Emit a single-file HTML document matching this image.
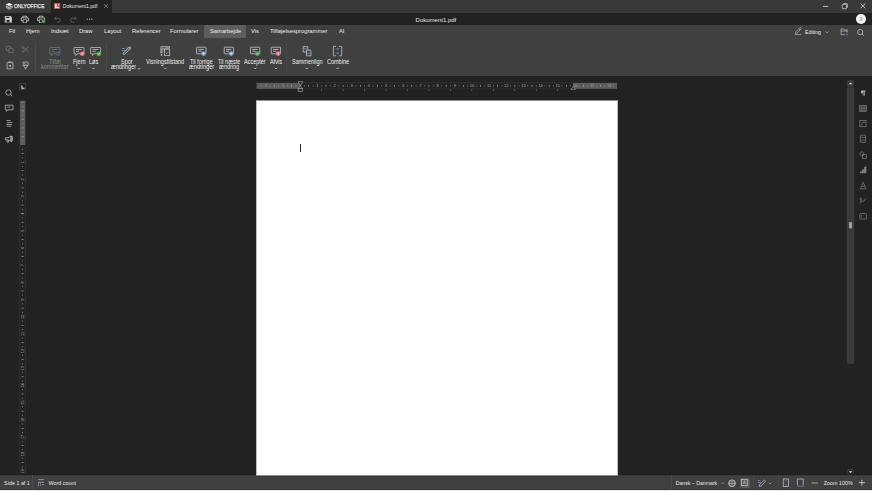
<!DOCTYPE html>
<html><head><meta charset="utf-8">
<style>
*{margin:0;padding:0;box-sizing:border-box}
html,body{width:872px;height:491px;overflow:hidden;background:#222;font-family:"Liberation Sans",sans-serif;color:#e8e8e8}
.a{position:absolute}
.t{position:absolute;white-space:nowrap;line-height:1}
svg{position:absolute;overflow:visible}
#title{left:0;top:0;width:872px;height:13px;background:#393939}
#quick{left:0;top:13px;width:872px;height:12px;background:#222}
#tb{left:0;top:25px;width:872px;height:51px;background:#404040}
#status{left:0;top:475px;width:872px;height:15px;background:#404040;border-top:1px solid #393939;border-bottom:1px solid #383838}
#bottom{left:0;top:490px;width:872px;height:1px;background:#e8e8e8}
.menu{font-size:6.1px;color:#ececec;top:27.9px;transform:scaleX(.95);transform-origin:0 0}
.lbl{font-size:6.4px;color:#ececec;transform:scaleX(.86);transform-origin:0 0}
.dis{color:#8a8a8a}
.st{font-size:5.4px;color:#e6e6e6;top:480.9px}
.sep{position:absolute;width:1px;background:#4c4c4c}
</style></head><body>
<!-- title bar -->
<div class="a" id="title"></div>
<div class="a" style="left:51px;top:0;width:61px;height:13px;background:#222"></div>
<svg style="left:0;top:0" width="50" height="13">
  <path d="M5.9 5.3L9.25 6.8 12.6 5.3 12.7 7.7 9.25 10.1 5.8 7.7z" fill="#b0b0b0"/>
  <path d="M6.1 6.9L9.25 8.3 12.4 6.9M6.6 8.4L9.25 9.5 11.9 8.4" stroke="#5a5a5a" stroke-width=".45" fill="none"/>
  <path d="M9.25 2.9L12.8 4.4 9.25 6 5.7 4.4z" fill="#fafafa"/>
</svg>
<div class="t" style="left:14.4px;top:3.2px;font-size:6.1px;color:#e4e4e4;-webkit-text-stroke:.25px #e4e4e4;transform:scaleX(0.79);transform-origin:0 0">ONLYOFFICE</div>
<svg style="left:0;top:0" width="70" height="13"><rect x="53.9" y="2.9" width="6.3" height="6.2" rx=".6" fill="#c25252"/><path d="M55 4.1h1.7v2.9h2.4v.9H55z" fill="#f0d8d8"/><circle cx="58.6" cy="4.6" r=".65" fill="#f0d8d8"/><path d="M57.3 6.5l1.1-1.2" stroke="#f0d8d8" stroke-width=".5"/></svg>
<div class="t" style="left:62.8px;top:3.6px;font-size:5.1px;color:#e6e6e6">Dokument1.pdf</div>
<svg style="left:103.8px;top:3.6px" width="4" height="4"><path d="M0 0L4 4M4 0L0 4" stroke="#aaa" stroke-width=".55"/></svg>
<svg style="left:822px;top:3px" width="44" height="7">
  <path d="M1 3.4h5.2" stroke="#ddd" stroke-width=".8"/>
  <rect x="20.2" y="1.5" width="4.3" height="4.2" rx=".7" stroke="#ddd" stroke-width=".7" fill="none"/>
  <path d="M21.3 .5h3.3a.9.9 0 0 1 .9.9v3.3" stroke="#ddd" stroke-width=".65" fill="none"/>
  <path d="M38.6 0.5L43.3 5.2M43.3 0.5L38.6 5.2" stroke="#ddd" stroke-width=".8"/>
</svg>

<!-- quick access -->
<div class="a" id="quick"></div>
<div class="t" style="left:415.6px;top:17px;font-size:6px;color:#e6e6e6">Dokument1.pdf</div>
<svg style="left:0;top:0" width="100" height="26">
  <path fill="#cfcfcf" d="M4.8 16h5.8l1.3 1.3v5.3H4.8z"/><path fill="#222" d="M6.3 16.8h3.1v1.3H6.3z M6.6 19.9h2.9v2h-2.9z M5.6 16.8h.2v5h-.2z"/>
  <g fill="#cfcfcf" fill-rule="evenodd">
    <path d="M22.4 17.4v-.5a1.1 1.1 0 0 1 1.1-1.1h2.6a1.1 1.1 0 0 1 1.1 1.1v.5h-.8v-.5a.3.3 0 0 0-.3-.3h-2.6a.3.3 0 0 0-.3.3v.5z"/>
    <path d="M22 17.4h5.6a1.3 1.3 0 0 1 1.3 1.3v1.5a1.1 1.1 0 0 1-1.1 1.1h-.9v1.5h-4.2v-1.5h-.9a1.1 1.1 0 0 1-1.1-1.1v-1.5a1.3 1.3 0 0 1 1.3-1.3z M22 18.2a.5.5 0 0 0-.5.5v1.5a.3.3 0 0 0 .3.3h.9v-1h4.2v1h.9a.3.3 0 0 0 .3-.3v-1.5a.5.5 0 0 0-.5-.5z M23.5 20.1v2.2h2.6v-2.2z"/>
    <path d="M38.7 17.4v-.5a1.1 1.1 0 0 1 1.1-1.1h2.6a1.1 1.1 0 0 1 1.1 1.1v.5h-.8v-.5a.3.3 0 0 0-.3-.3h-2.6a.3.3 0 0 0-.3.3v.5z"/>
    <path d="M38.3 17.4h5.6a1.3 1.3 0 0 1 1.3 1.3v1.5a1.1 1.1 0 0 1-1.1 1.1h-.9v1.5h-4.2v-1.5h-.9a1.1 1.1 0 0 1-1.1-1.1v-1.5a1.3 1.3 0 0 1 1.3-1.3z M38.3 18.2a.5.5 0 0 0-.5.5v1.5a.3.3 0 0 0 .3.3h.9v-1h4.2v1h.9a.3.3 0 0 0 .3-.3v-1.5a.5.5 0 0 0-.5-.5z M39.8 20.1v2.2h2.6v-2.2z"/>
  </g>
  <circle cx="43.4" cy="21.3" r="1.9" fill="#5aa65e" stroke="#222" stroke-width=".4"/>
  <g stroke="#6a6a6a" stroke-width=".8" fill="none">
    <path d="M54.6 18.2h3.6a2 2 0 0 1 0 4h-1.4M54.6 18.2l1.5-1.5M54.6 18.2l1.5 1.5"/>
    <path d="M76.2 18.2h-3.6a2 2 0 0 0 0 4h1.4M76.2 18.2l-1.5-1.5M76.2 18.2l-1.5 1.5"/>
  </g>
  <g fill="#a8a8a8"><rect x="86.7" y="18.6" width="1.2" height="1.2"/><rect x="89" y="18.6" width="1.2" height="1.2"/><rect x="91.3" y="18.6" width="1.2" height="1.2"/></g>
</svg>
<div class="a" style="left:856.4px;top:14.1px;width:9.6px;height:9.6px;border-radius:50%;background:#f4f4f4"></div>
<div class="t" style="left:859px;top:17.6px;font-size:4.6px;color:#8a7aa0;transform:scaleX(.7);transform-origin:0 0">JR</div>

<!-- toolbar -->
<div class="a" id="tb"></div>
<div class="a" style="left:204.4px;top:25.4px;width:41.6px;height:12.5px;background:#5d5d5d;border-radius:1.5px"></div>
<div class="t menu" style="left:9.1px">Fil</div>
<div class="t menu" style="left:25.8px">Hjem</div>
<div class="t menu" style="left:50.6px">Indsæt</div>
<div class="t menu" style="left:79px">Draw</div>
<div class="t menu" style="left:103.7px">Layout</div>
<div class="t menu" style="left:131.8px">Referencer</div>
<div class="t menu" style="left:170.3px">Formularer</div>
<div class="t menu" style="left:209.8px">Samarbejde</div>
<div class="t menu" style="left:251.3px">Vis</div>
<div class="t menu" style="left:270px">Tilføjelsesprogrammer</div>
<div class="t menu" style="left:338.9px">AI</div>

<svg style="left:0;top:0" width="872" height="40"><path d="M795.3 33.4l.3-1.4 4.3-4.3a.85.85 0 0 1 1.2 1.2l-4.3 4.3z M798.9 28.7l1.2 1.2 M794.8 34.5h6.4" stroke="#c8c8c8" stroke-width=".6" fill="none"/></svg>
<div class="t menu" style="left:804.5px;top:29.6px;font-size:5.5px">Editing</div>
<svg style="left:825px;top:31px" width="4" height="3"><path d="M.5 .5L2 2l1.5-1.5" stroke="#bbb" stroke-width=".6" fill="none"/></svg>
<svg style="left:0;top:0" width="872" height="40"><path d="M844.6 34.6H841V29h2.5l.9.9h2.8v2.6M841 31h6.2" stroke="#c8c8c8" stroke-width=".65" fill="none"/><path d="M844.9 34.3h2.9M847.1 33.5l.8.8-.8.8" stroke="#5b8ed6" stroke-width=".65" fill="none"/></svg>
<svg style="left:857px;top:28.5px" width="8" height="8"><circle cx="3.2" cy="3.1" r="2.6" stroke="#ccc" stroke-width=".75" fill="none"/><path d="M5.1 5L6.9 6.8" stroke="#ccc" stroke-width=".75"/></svg>

<!-- left group: copy/cut/paste/format -->
<svg style="left:0;top:38px" width="40" height="36">
  <g stroke="#7a7a7a" stroke-width=".7" fill="none">
    <rect x="6.3" y="8.4" width="4.3" height="4.3" rx=".8"/><rect x="8.8" y="10.3" width="4.4" height="4.4" rx=".8" fill="#404040"/>
    <circle cx="23.1" cy="13.6" r=".9"/><circle cx="23.1" cy="9.6" r=".9"/><path d="M23.9 13.1l4.8-4.4M23.9 10.1l4.4 3.4"/>
  </g>
  <g stroke="#bdbdbd" stroke-width=".75" fill="none">
    <path d="M7.1 24.6h5.9v6.2h-5.9z M8.7 24.6v-.8h2.7v.8"/><rect x="9.1" y="26.9" width="1.9" height="1.7" fill="#bdbdbd" stroke="none"/>
    <path d="M23.1 24.1h5v3.4h-5z M23.7 27.5l.9 2.4h1.9l.9-2.4 M25.5 29.9v1.4"/><path d="M24.6 24.6v1.6h2" stroke-width=".6"/>
  </g>
</svg>
<div class="sep" style="left:35px;top:44px;height:27px"></div>
<div class="sep" style="left:106px;top:44px;height:27px"></div>
<div class="sep" style="left:286px;top:44px;height:27px"></div>

<!-- comment icons -->
<svg style="left:0;top:38px" width="360" height="36">
  
  <g transform="translate(49.8 9.5)" stroke="#7a7a7a"><path d="M0 .6a.6.6 0 0 1 .6-.6h8.8a.6.6 0 0 1 .6.6v5a.6.6 0 0 1-.6.6H3.2L1.8 8.1V6.2H.6a.6.6 0 0 1-.6-.6z M2 2h5.6M2 3.9h3.2" stroke-width=".75" fill="none"/></g>
  <circle cx="58.1" cy="15.7" r="2.3" fill="#4a5f8a"/><path d="M56.9 15.7h2.4" stroke="#333" stroke-width=".6"/>
  <g transform="translate(74 9.5)" stroke="#c8c8c8"><path d="M0 .6a.6.6 0 0 1 .6-.6h8.8a.6.6 0 0 1 .6.6v5a.6.6 0 0 1-.6.6H3.2L1.8 8.1V6.2H.6a.6.6 0 0 1-.6-.6z M2 2h5.6M2 3.9h3.2" stroke-width=".75" fill="none"/></g>
  <circle cx="82.3" cy="15.7" r="2.3" fill="#e47c7c"/><path d="M81.1 15.7h2.4" stroke="#fff" stroke-width=".6"/>
  <g transform="translate(90.6 9.5)" stroke="#c8c8c8"><path d="M0 .6a.6.6 0 0 1 .6-.6h8.8a.6.6 0 0 1 .6.6v5a.6.6 0 0 1-.6.6H3.2L1.8 8.1V6.2H.6a.6.6 0 0 1-.6-.6z M2 2h5.6M2 3.9h3.2" stroke-width=".75" fill="none"/></g>
  <circle cx="98.9" cy="15.7" r="2.3" fill="#5aa85e"/><path d="M97.7 15.7l.8.8 1.4-1.4" stroke="#fff" stroke-width=".6" fill="none"/>

  <!-- track changes -->
  <path d="M123.9 15.6L129.6 10" stroke="#c4c4c4" stroke-width="2.6" stroke-linecap="round"/><path d="M123.9 15.6L129.6 10" stroke="#404040" stroke-width="1.1" stroke-linecap="round"/><path d="M128 9.4l1.6 1.6" stroke="#c4c4c4" stroke-width=".6"/>
  <path d="M121.9 10.5h3.4M121.9 12.5h3" stroke="#6b8fc8" stroke-width=".8"/>

  <!-- display mode -->
  <path d="M160.9 8.6h8.6v1.6h-8.6z" stroke="#c4c4c4" stroke-width=".7" fill="none"/><path d="M165.8 9h.8v.8h-.8zM167.6 9h.8v.8h-.8z" fill="#c4c4c4"/>
  <path d="M160.9 10.2v5.4M160.9 11.4h2.6M160.9 13h2.6M160.9 14.6h2" stroke="#c4c4c4" stroke-width=".7"/>
  <rect x="164.5" y="11.2" width="5.2" height="6.2" fill="none" stroke="#c4c4c4" stroke-width=".75"/>
  <path d="M160.9 16l1.7.6-.7.5.5.9-.5.3-.5-.9-.5.5z" fill="#c4c4c4"/>
  <path d="M165.6 14.6l1.1 1.1 2-2.2" stroke="#7aa3e0" stroke-width=".75" fill="none"/>

  <g transform="translate(196.6 9.2)" stroke="#c8c8c8"><path d="M0 .6a.6.6 0 0 1 .6-.6h8.2a.6.6 0 0 1 .6.6v5.4a.6.6 0 0 1-.6.6H.6a.6.6 0 0 1-.6-.6z M1.8 2.2h5.4M1.8 4h3.4" stroke-width=".8" fill="none"/></g>
  <circle cx="203.6" cy="15.6" r="2.3" fill="#7aa3e0"/><path d="M202.4 15.6h2.4M203.6 14.4v2.4" stroke="#fff" stroke-width=".5"/>
  <g transform="translate(224.2 9.2)" stroke="#c8c8c8"><path d="M0 .6a.6.6 0 0 1 .6-.6h8.2a.6.6 0 0 1 .6.6v5.4a.6.6 0 0 1-.6.6H.6a.6.6 0 0 1-.6-.6z M1.8 2.2h5.4M1.8 4h3.4" stroke-width=".8" fill="none"/></g>
  <circle cx="231.2" cy="15.6" r="2.3" fill="#7aa3e0"/><path d="M230 15.6h2.4M231.2 14.4v2.4" stroke="#fff" stroke-width=".5"/>
  <g transform="translate(250.4 9.2)" stroke="#c8c8c8"><path d="M0 .6a.6.6 0 0 1 .6-.6h8.2a.6.6 0 0 1 .6.6v5.4a.6.6 0 0 1-.6.6H.6a.6.6 0 0 1-.6-.6z M1.8 2.2h5.4M1.8 4h3.4" stroke-width=".8" fill="none"/></g>
  <circle cx="257.4" cy="15.6" r="2.3" fill="#5aa85e"/><path d="M256.3 15.6l.8.8 1.4-1.4" stroke="#fff" stroke-width=".5" fill="none"/>
  <g transform="translate(271.2 9.2)" stroke="#c8c8c8"><path d="M0 .6a.6.6 0 0 1 .6-.6h8.2a.6.6 0 0 1 .6.6v5.4a.6.6 0 0 1-.6.6H.6a.6.6 0 0 1-.6-.6z M1.8 2.2h5.4M1.8 4h3.4" stroke-width=".8" fill="none"/></g>
  <circle cx="278.2" cy="15.6" r="2.3" fill="#e47c7c"/><path d="M277.4 14.8l1.6 1.6M279 14.8l-1.6 1.6" stroke="#fff" stroke-width=".5"/>

  <!-- compare -->
  <path d="M303.2 8.6h4.6v5.4h-4.6z" stroke="#c8c8c8" stroke-width=".75" fill="none"/><path d="M306.5 12.2h4.4v5.6h-4.4z" stroke="#c8c8c8" stroke-width=".75" fill="#404040"/>
  <path d="M304.4 10.8h2.8M304.4 10.8l1-1M304.4 10.8l1 1M307.5 15.4h2.6M307.5 15.4l1-1M307.5 15.4l1 1" stroke="#7aa3e0" stroke-width=".6" fill="none"/>
  <!-- combine -->
  <path d="M336 8.4h-2.6v9.4h2.6 M339.1 8.4h2.6v9.4h-2.6" stroke="#c8c8c8" stroke-width=".75" fill="none"/>
  <path d="M335.6 10.8h2.8M337.6 9.8l1 1-1 1M335.6 15.2h2.8M337.6 14.2l1 1-1 1" stroke="#7aa3e0" stroke-width=".6" fill="none"/>
</svg>

<!-- labels -->
<div class="t lbl dis" style="left:49.2px;top:59.2px">Tilføj</div>
<div class="t lbl dis" style="left:41px;top:64px">kommentar</div>
<div class="t lbl" style="left:73px;top:59.2px">Fjern</div>
<div class="t lbl" style="left:89.4px;top:59.2px">Løs</div>
<div class="t lbl" style="left:120.8px;top:59.2px">Spor</div>
<div class="t lbl" style="left:111px;top:64px">ændringer</div>
<div class="t lbl" style="left:146px;top:59.2px">Visningstilstand</div>
<div class="t lbl" style="left:189.8px;top:59.2px">Til forrige</div>
<div class="t lbl" style="left:188.6px;top:64px">ændringer</div>
<div class="t lbl" style="left:218.3px;top:59.2px">Til næste</div>
<div class="t lbl" style="left:218.7px;top:64px">ændring</div>
<div class="t lbl" style="left:244.4px;top:59.2px">Acceptér</div>
<div class="t lbl" style="left:270px;top:59.2px">Afvis</div>
<div class="t lbl" style="left:291.8px;top:59.2px">Sammenlign</div>
<div class="t lbl" style="left:326.7px;top:59.2px">Combine</div>
<svg style="left:0;top:66.7px" width="360" height="4">
  <g stroke="#c4c4c4" stroke-width=".8" fill="none">
    <path d="M77.6 .7l1.2 1.3 1.2-1.3M92.3 .7l1.2 1.3 1.2-1.3M137.8 1.1l1.2 1.3 1.2-1.3M164.1 .7l1.2 1.3 1.2-1.3M254 .7l1.2 1.3 1.2-1.3M274.9 .7l1.2 1.3 1.2-1.3M305.5 .7l1.2 1.3 1.2-1.3M336.4 .7l1.2 1.3 1.2-1.3"/>
  </g>
</svg>

<!-- canvas -->
<svg style="left:0;top:76px" width="32" height="80">
  <g stroke="#bdbdbd" stroke-width=".75" fill="none">
    <circle cx="8.5" cy="16.5" r="2.7"/><path d="M10.4 18.4l2 1.8"/>
    <path d="M5.4 29.2h7.6v4.6H7.6l-1.2 1.6v-1.6h-1z M7.4 31.1h2.8"/>
    <path d="M6.3 44.6h4.3M7.1 46.6h5.3M6.3 48.5h5.5M6.9 50.3h4.3"/>
    <path d="M5.3 61.8h2.6l3.5-1.9v5.8l-3.5-1.9H5.3z M7.1 64v2.2h1.5v-2"/><ellipse cx="11.6" cy="62.8" rx=".9" ry="2.8"/>
  </g>
</svg>
<div class="a" style="left:19.3px;top:82.6px;width:6.4px;height:7px;border:.6px solid #3c3c3c;background:#1f1f1f"></div>
<svg style="left:19px;top:82px" width="8" height="8"><path d="M2.9 3.4v2.8h2.6" stroke="#e6e6e6" stroke-width="1.1" fill="none"/></svg>
<svg style="left:0;top:0" width="40" height="491">
<rect x="19.8" y="100.3" width="5.6" height="380" fill="#232323" stroke="#363636" stroke-width=".6"/>
<rect x="20.1" y="100.9" width="5" height="44.1" fill="#5c5c5c"/>
<rect x="21.45" y="101.77" width="2.2" height=".6" fill="#a4a4a4"/>
<rect x="22.15" y="105.97" width=".8" height=".8" fill="#a4a4a4"/>
<text x="22.55" y="110.66" font-size="3.9" text-anchor="middle" fill="#a4a4a4" transform="rotate(-90 22.55 110.66)" dy="1.4">2</text>
<rect x="22.15" y="114.55" width=".8" height=".8" fill="#a4a4a4"/>
<rect x="21.45" y="118.95" width="2.2" height=".6" fill="#a4a4a4"/>
<rect x="22.15" y="123.14" width=".8" height=".8" fill="#a4a4a4"/>
<text x="22.55" y="127.83" font-size="3.9" text-anchor="middle" fill="#a4a4a4" transform="rotate(-90 22.55 127.83)" dy="1.4">1</text>
<rect x="22.15" y="131.72" width=".8" height=".8" fill="#a4a4a4"/>
<rect x="21.45" y="136.11" width="2.2" height=".6" fill="#a4a4a4"/>
<rect x="22.15" y="140.31" width=".8" height=".8" fill="#a4a4a4"/>
<rect x="22.15" y="148.89" width=".8" height=".8" fill="#a8a8a8"/>
<rect x="21.45" y="153.28" width="2.2" height=".6" fill="#a8a8a8"/>
<rect x="22.15" y="157.48" width=".8" height=".8" fill="#a8a8a8"/>
<text x="22.55" y="162.17" font-size="3.9" text-anchor="middle" fill="#a8a8a8" transform="rotate(-90 22.55 162.17)" dy="1.4">1</text>
<rect x="22.15" y="166.06" width=".8" height=".8" fill="#a8a8a8"/>
<rect x="21.45" y="170.45" width="2.2" height=".6" fill="#a8a8a8"/>
<rect x="22.15" y="174.65" width=".8" height=".8" fill="#a8a8a8"/>
<text x="22.55" y="179.34" font-size="3.9" text-anchor="middle" fill="#a8a8a8" transform="rotate(-90 22.55 179.34)" dy="1.4">2</text>
<rect x="22.15" y="183.23" width=".8" height=".8" fill="#a8a8a8"/>
<rect x="21.45" y="187.62" width="2.2" height=".6" fill="#a8a8a8"/>
<rect x="22.15" y="191.82" width=".8" height=".8" fill="#a8a8a8"/>
<text x="22.55" y="196.51" font-size="3.9" text-anchor="middle" fill="#a8a8a8" transform="rotate(-90 22.55 196.51)" dy="1.4">3</text>
<rect x="22.15" y="200.40" width=".8" height=".8" fill="#a8a8a8"/>
<rect x="21.45" y="204.79" width="2.2" height=".6" fill="#a8a8a8"/>
<rect x="22.15" y="208.99" width=".8" height=".8" fill="#a8a8a8"/>
<text x="22.55" y="213.68" font-size="3.9" text-anchor="middle" fill="#a8a8a8" transform="rotate(-90 22.55 213.68)" dy="1.4">4</text>
<rect x="22.15" y="217.57" width=".8" height=".8" fill="#a8a8a8"/>
<rect x="21.45" y="221.97" width="2.2" height=".6" fill="#a8a8a8"/>
<rect x="22.15" y="226.16" width=".8" height=".8" fill="#a8a8a8"/>
<text x="22.55" y="230.85" font-size="3.9" text-anchor="middle" fill="#a8a8a8" transform="rotate(-90 22.55 230.85)" dy="1.4">5</text>
<rect x="22.15" y="234.74" width=".8" height=".8" fill="#a8a8a8"/>
<rect x="21.45" y="239.13" width="2.2" height=".6" fill="#a8a8a8"/>
<rect x="22.15" y="243.33" width=".8" height=".8" fill="#a8a8a8"/>
<text x="22.55" y="248.02" font-size="3.9" text-anchor="middle" fill="#a8a8a8" transform="rotate(-90 22.55 248.02)" dy="1.4">6</text>
<rect x="22.15" y="251.91" width=".8" height=".8" fill="#a8a8a8"/>
<rect x="21.45" y="256.31" width="2.2" height=".6" fill="#a8a8a8"/>
<rect x="22.15" y="260.50" width=".8" height=".8" fill="#a8a8a8"/>
<text x="22.55" y="265.19" font-size="3.9" text-anchor="middle" fill="#a8a8a8" transform="rotate(-90 22.55 265.19)" dy="1.4">7</text>
<rect x="22.15" y="269.08" width=".8" height=".8" fill="#a8a8a8"/>
<rect x="21.45" y="273.47" width="2.2" height=".6" fill="#a8a8a8"/>
<rect x="22.15" y="277.67" width=".8" height=".8" fill="#a8a8a8"/>
<text x="22.55" y="282.36" font-size="3.9" text-anchor="middle" fill="#a8a8a8" transform="rotate(-90 22.55 282.36)" dy="1.4">8</text>
<rect x="22.15" y="286.25" width=".8" height=".8" fill="#a8a8a8"/>
<rect x="21.45" y="290.65" width="2.2" height=".6" fill="#a8a8a8"/>
<rect x="22.15" y="294.84" width=".8" height=".8" fill="#a8a8a8"/>
<text x="22.55" y="299.53" font-size="3.9" text-anchor="middle" fill="#a8a8a8" transform="rotate(-90 22.55 299.53)" dy="1.4">9</text>
<rect x="22.15" y="303.42" width=".8" height=".8" fill="#a8a8a8"/>
<rect x="21.45" y="307.81" width="2.2" height=".6" fill="#a8a8a8"/>
<rect x="22.15" y="312.01" width=".8" height=".8" fill="#a8a8a8"/>
<text x="22.55" y="316.70" font-size="3.9" text-anchor="middle" fill="#a8a8a8" transform="rotate(-90 22.55 316.70)" dy="1.4">10</text>
<rect x="22.15" y="320.59" width=".8" height=".8" fill="#a8a8a8"/>
<rect x="21.45" y="324.99" width="2.2" height=".6" fill="#a8a8a8"/>
<rect x="22.15" y="329.18" width=".8" height=".8" fill="#a8a8a8"/>
<text x="22.55" y="333.87" font-size="3.9" text-anchor="middle" fill="#a8a8a8" transform="rotate(-90 22.55 333.87)" dy="1.4">11</text>
<rect x="22.15" y="337.76" width=".8" height=".8" fill="#a8a8a8"/>
<rect x="21.45" y="342.16" width="2.2" height=".6" fill="#a8a8a8"/>
<rect x="22.15" y="346.35" width=".8" height=".8" fill="#a8a8a8"/>
<text x="22.55" y="351.04" font-size="3.9" text-anchor="middle" fill="#a8a8a8" transform="rotate(-90 22.55 351.04)" dy="1.4">12</text>
<rect x="22.15" y="354.93" width=".8" height=".8" fill="#a8a8a8"/>
<rect x="21.45" y="359.32" width="2.2" height=".6" fill="#a8a8a8"/>
<rect x="22.15" y="363.52" width=".8" height=".8" fill="#a8a8a8"/>
<text x="22.55" y="368.21" font-size="3.9" text-anchor="middle" fill="#a8a8a8" transform="rotate(-90 22.55 368.21)" dy="1.4">13</text>
<rect x="22.15" y="372.10" width=".8" height=".8" fill="#a8a8a8"/>
<rect x="21.45" y="376.50" width="2.2" height=".6" fill="#a8a8a8"/>
<rect x="22.15" y="380.69" width=".8" height=".8" fill="#a8a8a8"/>
<text x="22.55" y="385.38" font-size="3.9" text-anchor="middle" fill="#a8a8a8" transform="rotate(-90 22.55 385.38)" dy="1.4">14</text>
<rect x="22.15" y="389.27" width=".8" height=".8" fill="#a8a8a8"/>
<rect x="21.45" y="393.67" width="2.2" height=".6" fill="#a8a8a8"/>
<rect x="22.15" y="397.86" width=".8" height=".8" fill="#a8a8a8"/>
<text x="22.55" y="402.55" font-size="3.9" text-anchor="middle" fill="#a8a8a8" transform="rotate(-90 22.55 402.55)" dy="1.4">15</text>
<rect x="22.15" y="406.44" width=".8" height=".8" fill="#a8a8a8"/>
<rect x="21.45" y="410.84" width="2.2" height=".6" fill="#a8a8a8"/>
<rect x="22.15" y="415.03" width=".8" height=".8" fill="#a8a8a8"/>
<text x="22.55" y="419.72" font-size="3.9" text-anchor="middle" fill="#a8a8a8" transform="rotate(-90 22.55 419.72)" dy="1.4">16</text>
<rect x="22.15" y="423.61" width=".8" height=".8" fill="#a8a8a8"/>
<rect x="21.45" y="428.00" width="2.2" height=".6" fill="#a8a8a8"/>
<rect x="22.15" y="432.20" width=".8" height=".8" fill="#a8a8a8"/>
<text x="22.55" y="436.89" font-size="3.9" text-anchor="middle" fill="#a8a8a8" transform="rotate(-90 22.55 436.89)" dy="1.4">17</text>
<rect x="22.15" y="440.78" width=".8" height=".8" fill="#a8a8a8"/>
<rect x="21.45" y="445.18" width="2.2" height=".6" fill="#a8a8a8"/>
<rect x="22.15" y="449.37" width=".8" height=".8" fill="#a8a8a8"/>
<text x="22.55" y="454.06" font-size="3.9" text-anchor="middle" fill="#a8a8a8" transform="rotate(-90 22.55 454.06)" dy="1.4">18</text>
<rect x="22.15" y="457.95" width=".8" height=".8" fill="#a8a8a8"/>
<rect x="21.45" y="462.35" width="2.2" height=".6" fill="#a8a8a8"/>
<rect x="22.15" y="466.54" width=".8" height=".8" fill="#a8a8a8"/>
<text x="22.55" y="471.23" font-size="3.9" text-anchor="middle" fill="#a8a8a8" transform="rotate(-90 22.55 471.23)" dy="1.4">19</text>
</svg>
<svg style="left:0;top:0" width="872" height="100">
<rect x="256.6" y="82.3" width="360.4" height="6.6" fill="#232323" stroke="#363636" stroke-width=".6"/>
<rect x="256.6" y="83" width="43.6" height="5.8" fill="#5c5c5c"/>
<rect x="573.3" y="83" width="43.7" height="5.8" fill="#5c5c5c"/>
<rect x="261.17" y="85.50" width=".8" height=".8" fill="#a4a4a4"/>
<text x="265.86" y="87.30" font-size="3.9" text-anchor="middle" fill="#a4a4a4">2</text>
<rect x="269.75" y="85.50" width=".8" height=".8" fill="#a4a4a4"/>
<rect x="274.14" y="84.80" width=".6" height="2.2" fill="#a4a4a4"/>
<rect x="278.34" y="85.50" width=".8" height=".8" fill="#a4a4a4"/>
<text x="283.03" y="87.30" font-size="3.9" text-anchor="middle" fill="#a4a4a4">1</text>
<rect x="286.92" y="85.50" width=".8" height=".8" fill="#a4a4a4"/>
<rect x="291.31" y="84.80" width=".6" height="2.2" fill="#a4a4a4"/>
<rect x="295.51" y="85.50" width=".8" height=".8" fill="#a4a4a4"/>
<rect x="304.09" y="85.50" width=".8" height=".8" fill="#a8a8a8"/>
<rect x="308.48" y="84.80" width=".6" height="2.2" fill="#a8a8a8"/>
<rect x="312.68" y="85.50" width=".8" height=".8" fill="#a8a8a8"/>
<text x="317.37" y="87.30" font-size="3.9" text-anchor="middle" fill="#a8a8a8">1</text>
<rect x="321.26" y="85.50" width=".8" height=".8" fill="#a8a8a8"/>
<rect x="325.65" y="84.80" width=".6" height="2.2" fill="#a8a8a8"/>
<rect x="329.85" y="85.50" width=".8" height=".8" fill="#a8a8a8"/>
<text x="334.54" y="87.30" font-size="3.9" text-anchor="middle" fill="#a8a8a8">2</text>
<rect x="338.43" y="85.50" width=".8" height=".8" fill="#a8a8a8"/>
<rect x="342.82" y="84.80" width=".6" height="2.2" fill="#a8a8a8"/>
<rect x="347.02" y="85.50" width=".8" height=".8" fill="#a8a8a8"/>
<text x="351.71" y="87.30" font-size="3.9" text-anchor="middle" fill="#a8a8a8">3</text>
<rect x="355.60" y="85.50" width=".8" height=".8" fill="#a8a8a8"/>
<rect x="360.00" y="84.80" width=".6" height="2.2" fill="#a8a8a8"/>
<rect x="364.19" y="85.50" width=".8" height=".8" fill="#a8a8a8"/>
<text x="368.88" y="87.30" font-size="3.9" text-anchor="middle" fill="#a8a8a8">4</text>
<rect x="372.77" y="85.50" width=".8" height=".8" fill="#a8a8a8"/>
<rect x="377.17" y="84.80" width=".6" height="2.2" fill="#a8a8a8"/>
<rect x="381.36" y="85.50" width=".8" height=".8" fill="#a8a8a8"/>
<text x="386.05" y="87.30" font-size="3.9" text-anchor="middle" fill="#a8a8a8">5</text>
<rect x="389.94" y="85.50" width=".8" height=".8" fill="#a8a8a8"/>
<rect x="394.33" y="84.80" width=".6" height="2.2" fill="#a8a8a8"/>
<rect x="398.53" y="85.50" width=".8" height=".8" fill="#a8a8a8"/>
<text x="403.22" y="87.30" font-size="3.9" text-anchor="middle" fill="#a8a8a8">6</text>
<rect x="407.11" y="85.50" width=".8" height=".8" fill="#a8a8a8"/>
<rect x="411.50" y="84.80" width=".6" height="2.2" fill="#a8a8a8"/>
<rect x="415.70" y="85.50" width=".8" height=".8" fill="#a8a8a8"/>
<text x="420.39" y="87.30" font-size="3.9" text-anchor="middle" fill="#a8a8a8">7</text>
<rect x="424.28" y="85.50" width=".8" height=".8" fill="#a8a8a8"/>
<rect x="428.68" y="84.80" width=".6" height="2.2" fill="#a8a8a8"/>
<rect x="432.87" y="85.50" width=".8" height=".8" fill="#a8a8a8"/>
<text x="437.56" y="87.30" font-size="3.9" text-anchor="middle" fill="#a8a8a8">8</text>
<rect x="441.45" y="85.50" width=".8" height=".8" fill="#a8a8a8"/>
<rect x="445.84" y="84.80" width=".6" height="2.2" fill="#a8a8a8"/>
<rect x="450.04" y="85.50" width=".8" height=".8" fill="#a8a8a8"/>
<text x="454.73" y="87.30" font-size="3.9" text-anchor="middle" fill="#a8a8a8">9</text>
<rect x="458.62" y="85.50" width=".8" height=".8" fill="#a8a8a8"/>
<rect x="463.01" y="84.80" width=".6" height="2.2" fill="#a8a8a8"/>
<rect x="467.21" y="85.50" width=".8" height=".8" fill="#a8a8a8"/>
<text x="471.90" y="87.30" font-size="3.9" text-anchor="middle" fill="#a8a8a8">10</text>
<rect x="475.79" y="85.50" width=".8" height=".8" fill="#a8a8a8"/>
<rect x="480.19" y="84.80" width=".6" height="2.2" fill="#a8a8a8"/>
<rect x="484.38" y="85.50" width=".8" height=".8" fill="#a8a8a8"/>
<text x="489.07" y="87.30" font-size="3.9" text-anchor="middle" fill="#a8a8a8">11</text>
<rect x="492.96" y="85.50" width=".8" height=".8" fill="#a8a8a8"/>
<rect x="497.35" y="84.80" width=".6" height="2.2" fill="#a8a8a8"/>
<rect x="501.55" y="85.50" width=".8" height=".8" fill="#a8a8a8"/>
<text x="506.24" y="87.30" font-size="3.9" text-anchor="middle" fill="#a8a8a8">12</text>
<rect x="510.13" y="85.50" width=".8" height=".8" fill="#a8a8a8"/>
<rect x="514.53" y="84.80" width=".6" height="2.2" fill="#a8a8a8"/>
<rect x="518.72" y="85.50" width=".8" height=".8" fill="#a8a8a8"/>
<text x="523.41" y="87.30" font-size="3.9" text-anchor="middle" fill="#a8a8a8">13</text>
<rect x="527.30" y="85.50" width=".8" height=".8" fill="#a8a8a8"/>
<rect x="531.70" y="84.80" width=".6" height="2.2" fill="#a8a8a8"/>
<rect x="535.89" y="85.50" width=".8" height=".8" fill="#a8a8a8"/>
<text x="540.58" y="87.30" font-size="3.9" text-anchor="middle" fill="#a8a8a8">14</text>
<rect x="544.47" y="85.50" width=".8" height=".8" fill="#a8a8a8"/>
<rect x="548.87" y="84.80" width=".6" height="2.2" fill="#a8a8a8"/>
<rect x="553.06" y="85.50" width=".8" height=".8" fill="#a8a8a8"/>
<text x="557.75" y="87.30" font-size="3.9" text-anchor="middle" fill="#a8a8a8">15</text>
<rect x="561.64" y="85.50" width=".8" height=".8" fill="#a8a8a8"/>
<rect x="566.04" y="84.80" width=".6" height="2.2" fill="#a8a8a8"/>
<rect x="570.23" y="85.50" width=".8" height=".8" fill="#a8a8a8"/>
<text x="574.92" y="87.30" font-size="3.9" text-anchor="middle" fill="#a4a4a4">16</text>
<rect x="578.81" y="85.50" width=".8" height=".8" fill="#a4a4a4"/>
<rect x="583.21" y="84.80" width=".6" height="2.2" fill="#a4a4a4"/>
<rect x="587.40" y="85.50" width=".8" height=".8" fill="#a4a4a4"/>
<text x="592.09" y="87.30" font-size="3.9" text-anchor="middle" fill="#a4a4a4">17</text>
<rect x="595.98" y="85.50" width=".8" height=".8" fill="#a4a4a4"/>
<rect x="600.38" y="84.80" width=".6" height="2.2" fill="#a4a4a4"/>
<rect x="604.57" y="85.50" width=".8" height=".8" fill="#a4a4a4"/>
<text x="609.26" y="87.30" font-size="3.9" text-anchor="middle" fill="#a4a4a4">18</text>
<rect x="613.15" y="85.50" width=".8" height=".8" fill="#a4a4a4"/>
<rect x="321.36" y="89.4" width=".6" height="1.5" fill="#8a8a8a"/>
<rect x="342.82" y="89.4" width=".6" height="1.5" fill="#8a8a8a"/>
<rect x="364.28" y="89.4" width=".6" height="1.5" fill="#8a8a8a"/>
<rect x="385.74" y="89.4" width=".6" height="1.5" fill="#8a8a8a"/>
<rect x="407.20" y="89.4" width=".6" height="1.5" fill="#8a8a8a"/>
<rect x="428.66" y="89.4" width=".6" height="1.5" fill="#8a8a8a"/>
<rect x="450.12" y="89.4" width=".6" height="1.5" fill="#8a8a8a"/>
<rect x="471.58" y="89.4" width=".6" height="1.5" fill="#8a8a8a"/>
<rect x="493.04" y="89.4" width=".6" height="1.5" fill="#8a8a8a"/>
<rect x="514.50" y="89.4" width=".6" height="1.5" fill="#8a8a8a"/>
<rect x="535.96" y="89.4" width=".6" height="1.5" fill="#8a8a8a"/>
<rect x="557.42" y="89.4" width=".6" height="1.5" fill="#8a8a8a"/>
<path d="M298.1 81.6h4.6l-2.3 4.4z M298.1 88.4l2.3-2.2 2.3 2.2z" fill="#2b2b2b" stroke="#b5b5b5" stroke-width=".55"/>
<rect x="298.1" y="88.5" width="4.6" height="3" fill="#2b2b2b" stroke="#b5b5b5" stroke-width=".55"/>
<path d="M571 89.3l2.3-2.6 2.3 2.6z" fill="#2b2b2b" stroke="#b5b5b5" stroke-width=".55"/>
</svg>
<!-- page -->
<div class="a" style="left:256px;top:100px;width:362px;height:375px;background:#fff;border:1px solid #bdbdbd;border-top-color:#8e8e8e;border-bottom:0"></div>
<div class="a" style="left:299.6px;top:144px;width:1px;height:8px;background:#2a2a2a"></div>

<!-- scrollbar -->
<svg style="left:0;top:0" width="872" height="491">
  <rect x="847.2" y="80.3" width="6.6" height="6.2" rx="1.2" fill="#3a3a3a" stroke="#444" stroke-width=".5"/>
  <path d="M848.7 84.3l1.8-1.9 1.8 1.9z" fill="#e0e0e0"/>
  <rect x="847.2" y="87.4" width="6.6" height="276" rx="1.2" fill="#3a3a3a" stroke="#474747" stroke-width=".6"/>
  <rect x="848.9" y="221.9" width="3.3" height="6.6" rx=".6" fill="#a8a8a8" stroke="#333" stroke-width=".4"/>
  <rect x="847.5" y="469.4" width="6" height="5.4" rx="1" fill="#2c2c2c" stroke="#484848" stroke-width=".5"/>
  <path d="M848.8 471.3l1.7 1.8 1.7-1.8z" fill="#e0e0e0"/>
</svg>

<!-- right sidebar -->
<svg style="left:0;top:0" width="872" height="230">
  <path d="M862.2 90.6h3.4v.8h-.6v4.4h-.7v-4.4h-.8v4.4h-.7v-2.4h-.6a1.4 1.4 0 0 1 0-2.8z" fill="#b4b4b4"/>
  <g stroke="#7c7c7c" stroke-width=".7" fill="none">
    <rect x="859.3" y="105.3" width="7.2" height="6.2"/><path d="M859.3 107h7.2M859.3 108.6h7.2M859.3 110.1h7.2M861.7 105.3v6.2M864.1 105.3v6.2"/>
    <rect x="859.8" y="120.5" width="6.2" height="6.2"/><path d="M861 125.6l1.6-3.2h2.4"/>
    <rect x="860.4" y="135.2" width="5.2" height="7.3" rx=".5"/><path d="M860.4 137.4h5.2M860.4 140.2h5.2"/>
    <circle cx="861.8" cy="153.8" r="2"/><rect x="862.4" y="154.4" width="3.8" height="4"/>
    <path d="M859.9 173.2v-1.8h2v-2h2v-2.4h1.2v-.8h1.3v7z" fill="#7c7c7c" stroke="none"/>
    <path d="M863.2 182.2l-2.6 6.4M863.2 182.2l2.6 6.4M861.4 186.4h3.6M859.8 188.8h6.6"/>
    <path d="M860.4 203.6c.6-1.6 1.6-5.4.4-5.8-1.2-.4-.8 3 .8 3.6 1.2.4 2.4-.6 3.2-1.4M863.6 201l2.6-2.6"/>
    <rect x="859.8" y="213.6" width="6.6" height="5.4" rx=".5"/><path d="M861.6 215v2.6"/>
  </g>
</svg>

<!-- status bar -->
<div class="a" id="status"></div>
<div class="a" id="bottom"></div>
<div class="a" style="left:0;top:474px;width:872px;height:1px;background:#1f1f1f"></div>
<div class="a" style="left:256px;top:474px;width:362px;height:1px;background:#fff;border-left:1px solid #bdbdbd;border-right:1px solid #bdbdbd"></div>
<div class="a" style="left:256px;top:475px;width:362px;height:1px;background:#8e8e8e"></div>
<div class="a" style="left:256px;top:476px;width:362px;height:1px;background:#343434"></div>
<div class="t st" style="left:4.1px">Side 1 af 1</div>
<div class="sep" style="left:32px;top:475px;height:14.5px;background:#4a4a4a"></div>
<svg style="left:0;top:470px" width="60" height="20">
  <path d="M38 9.6h6M38 12.3h6M42 14.6h2" stroke="#b0b0b0" stroke-width=".7"/>
  <path d="M38.5 13.2v2.9M40.6 13.2v2.9" stroke="#7aa0d8" stroke-width=".7"/>
</svg>
<div class="t st" style="left:48.5px">Word count</div>
<div class="sep" style="left:671px;top:475px;height:14.5px;background:#4a4a4a"></div>
<div class="t st" style="left:675.7px;font-size:5.2px">Dansk – Danmark</div>
<svg style="left:721px;top:482px" width="4" height="3"><path d="M.4 .6L1.6 1.8 2.8 .6" stroke="#bbb" stroke-width=".6" fill="none"/></svg>
<svg style="left:727px;top:479px" width="10" height="9"><circle cx="5" cy="4.3" r="3.4" stroke="#ccc" stroke-width=".8" fill="none"/><path d="M5 .9v6.8M1.6 4.3h6.8M3.4 1.4c-1 1.8-1 4 0 5.8M6.6 1.4c1 1.8 1 4 0 5.8" stroke="#ccc" stroke-width=".6" fill="none"/></svg>
<div class="a" style="left:739.5px;top:477.6px;width:10.4px;height:10.4px;background:#5a5a5a;border-radius:1.6px"></div>
<svg style="left:739px;top:477px" width="11" height="11"><rect x="2.6" y="2.4" width="5.6" height="6.2" stroke="#ccc" stroke-width=".7" fill="none"/><path d="M4.2 7l1.2-3.4L6.6 7M4.6 6h1.6" stroke="#ccc" stroke-width=".5" fill="none"/><path d="M6.8 8.4l.8.8 1.6-1.8" stroke="#6b9ae0" stroke-width=".7" fill="none"/></svg>
<div class="sep" style="left:753.3px;top:475px;height:14.5px;background:#4a4a4a"></div>
<svg style="left:0;top:470px" width="872" height="20"><path d="M759.2 16.2l.2-1.5 4.4-4.4a1 1 0 0 1 1.4 1.4l-4.4 4.4z" stroke="#c4c4c4" stroke-width=".7" fill="none"/><path d="M757.9 10.6h2.6M757.9 12.4h2.6" stroke="#7aa0d8" stroke-width=".7"/></svg>
<svg style="left:768px;top:482px" width="5" height="3"><path d="M.6 .6l1.4 1.4 1.4-1.4" stroke="#bbb" stroke-width=".6" fill="none"/></svg>
<div class="sep" style="left:777.6px;top:475px;height:14.5px;background:#4a4a4a"></div>
<svg style="left:782px;top:478px" width="8" height="10"><rect x="1.2" y="1" width="5.4" height="7.6" stroke="#ccc" stroke-width=".7" fill="none"/><path d="M2.6 3.4L3.9 2.4 5.2 3.4M2.6 6.2l1.3 1 1.3-1" stroke="#6b9ae0" stroke-width=".5" fill="none"/></svg>
<svg style="left:796px;top:478px" width="9" height="10"><path d="M1.4 7V1h5.8v6" stroke="#ccc" stroke-width=".7" fill="none"/><path d="M1 8.2h7M1 8.2l1-.8M8 8.2l-1-.8" stroke="#6b9ae0" stroke-width=".6" fill="none"/></svg>
<svg style="left:811px;top:482px" width="8" height="2"><path d="M.5 1h6.5" stroke="#ccc" stroke-width=".7"/></svg>
<div class="t st" style="left:823.8px">Zoom 100%</div>
<svg style="left:858px;top:479px" width="8" height="8"><path d="M.9 3.7h6M3.9.7v6" stroke="#ddd" stroke-width=".8"/></svg>
</body></html>
